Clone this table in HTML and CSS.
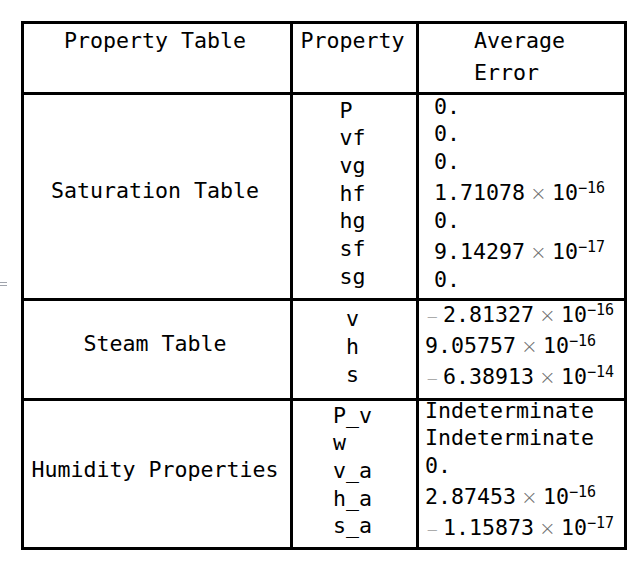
FILE: index.html
```html
<!DOCTYPE html>
<html>
<head>
<meta charset="utf-8">
<link rel="stylesheet" href="styles.css">
</head>
<body>
<div class="mark"></div>
<div class="table">
  <div class="cell hd"><div class="stack">Property Table</div></div>
  <div class="cell hd"><div class="stack">Property</div></div>
  <div class="cell hd"><div class="stack"><div>Average</div><div>Error</div></div></div>

  <div class="cell"><div class="stack sat-label"><div class="ln">Saturation Table</div></div></div>
  <div class="cell"><div class="stack sat-props">
    <div class="ln">P</div><div class="ln">vf</div><div class="ln">vg</div><div class="ln">hf</div><div class="ln">hg</div><div class="ln">sf</div><div class="ln">sg</div>
  </div></div>
  <div class="cell"><div class="stack sat-vals">
    <div class="ln">0.</div>
    <div class="ln">0.</div>
    <div class="ln">0.</div>
    <div class="ln x">1.71078<span class="times">×</span>10<span class="sp">−16</span></div>
    <div class="ln">0.</div>
    <div class="ln x">9.14297<span class="times">×</span>10<span class="sp">−17</span></div>
    <div class="ln">0.</div>
  </div></div>

  <div class="cell"><div class="stack st-label"><div class="ln">Steam Table</div></div></div>
  <div class="cell"><div class="stack st-props">
    <div class="ln">v</div><div class="ln">h</div><div class="ln">s</div>
  </div></div>
  <div class="cell"><div class="stack st-vals">
    <div class="ln x"><span class="neg">−</span>2.81327<span class="times">×</span>10<span class="sp">−16</span></div>
    <div class="ln x">9.05757<span class="times">×</span>10<span class="sp">−16</span></div>
    <div class="ln x"><span class="neg">−</span>6.38913<span class="times">×</span>10<span class="sp">−14</span></div>
  </div></div>

  <div class="cell"><div class="stack hu-label"><div class="ln">Humidity Properties</div></div></div>
  <div class="cell"><div class="stack hu-props">
    <div class="ln">P_v</div><div class="ln">w</div><div class="ln">v_a</div><div class="ln">h_a</div><div class="ln">s_a</div>
  </div></div>
  <div class="cell"><div class="stack hu-vals">
    <div class="ln">Indeterminate</div>
    <div class="ln">Indeterminate</div>
    <div class="ln">0.</div>
    <div class="ln x">2.87453<span class="times">×</span>10<span class="sp">−16</span></div>
    <div class="ln x"><span class="neg">−</span>1.15873<span class="times">×</span>10<span class="sp">−17</span></div>
  </div></div>
</div>
</body>
</html>
```
FILE: styles.css
```css
html, body {
  margin: 0;
  padding: 0;
  background: #fff;
}
body {
  position: relative;
  font-family: "DejaVu Sans Mono", "Liberation Mono", monospace;
  font-size: 21.6px;
  color: #000;
}
.mark {
  position: absolute;
  left: 0;
  top: 282px;
  width: 7px;
  height: 2px;
  border-top: 1px solid #a0a4ac;
  border-bottom: 1px solid #a0a4ac;
}
.table {
  display: grid;
  grid-template-columns: 266px 123px 205px;
  grid-template-rows: 68px 203px 97px 146px;
  gap: 3px;
  padding: 3px;
  background: #000;
  width: max-content;
  margin: 21px 0 0 21px;
}
.cell {
  background: #fff;
  display: flex;
  flex-direction: column;
  align-items: center;
  padding-right: 4px;
}
.stack {
  text-align: left;
}
.hd .stack {
  line-height: 32px;
  margin-top: 0.5px;
  white-space: nowrap;
}
.ln {
  line-height: 27.7px;
  height: 27.7px;
  white-space: nowrap;
}
.ln.x {
  padding-top: 3.5px;
}
.times {
  display: inline-block;
  width: 27px;
  text-align: center;
  font-family: "DejaVu Sans", sans-serif;
  font-weight: 200;
  font-size: 20px;
  color: #707070;
}
.neg {
  display: inline-block;
  width: 18px;
  padding-left: 1px;
  box-sizing: border-box;
  font-family: "DejaVu Sans", sans-serif;
  font-weight: 200;
  font-size: 15px;
  color: #6a6a6a;
}
.sp {
  font-size: 15px;
  vertical-align: 7.5px;
  line-height: 0;
}
.sat-label { margin-top: 82px; }
.sat-props { margin-top: 1.7px; }
.sat-vals { margin-top: -2.3px; }
.st-label { margin-top: 28.7px; }
.st-props { margin-top: 4.2px; }
.st-vals { margin-top: -3.8px; }
.hu-label { margin-top: 55px; }
.hu-props { margin-top: 0.7px; }
.hu-vals { margin-top: -4.3px; }
```
